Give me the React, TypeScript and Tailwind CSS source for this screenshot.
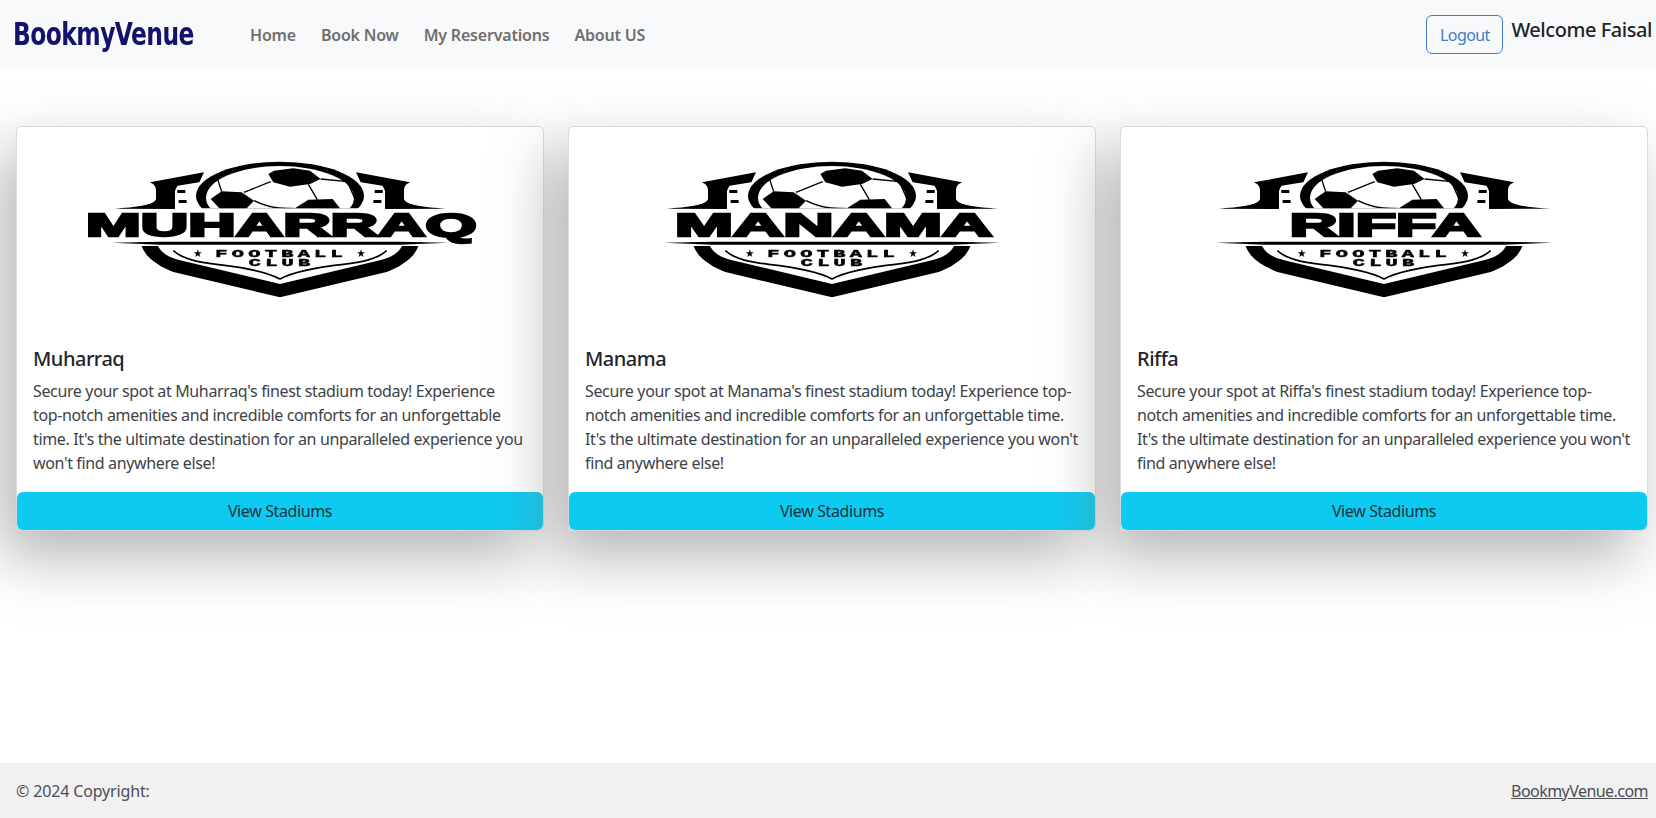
const clubs = [
  { name: "Muharraq", word: "MUHARRAQ", wordX: 78, wordW: 1172 },
  { name: "Manama", word: "MANAMA", wordX: 189, wordW: 952 },
  { name: "Riffa", word: "RIFFA", wordX: 377, wordW: 572 },
]

const navLinks = ["Home", "Book Now", "My Reservations", "About US"]

function Crest({ word, wordX, wordW }: { word: string; wordX: number; wordW: number }) {
  return (
    <svg viewBox="0 0 1320 480" className="w-[440px] h-[160px] blur-[0.4px]">
      <clipPath id={`ball-${word}`}>
        <rect x="300" y="0" width="720" height="178" />
      </clipPath>
      {/* wings */}
      <path d="M432 70 L270 100 C280 105 288 110 288 125 L288 150 C284 168 230 175 160 179 L345 180 L345 125 L352 110 L418 100Z" />
      <path d="M888 70 L1050 100 C1040 105 1032 110 1032 125 L1032 150 C1036 168 1090 175 1160 179 L975 180 L975 125 L968 110 L902 100Z" />
      <rect x="352" y="123" width="24" height="9" />
      <rect x="356" y="153" width="24" height="9" />
      <rect x="944" y="123" width="24" height="9" />
      <rect x="940" y="153" width="24" height="9" />
      {/* ball */}
      <g clipPath={`url(#ball-${word})`}>
        <ellipse cx="660" cy="140" rx="252" ry="102" />
        <ellipse cx="660" cy="146" rx="222" ry="95" fill="#fff" />
        <path d="M625 75 L642 65 L700 58 L750 65 L782 90 L750 105 L690 113 L640 100Z" />
        <path d="M452 150 L485 127 L545 130 L582 155 L558 180 L480 180Z" />
        <path d="M695 184 L745 152 L818 150 L845 184Z" />
        <path d="M472 88 L485 128 M632 98 L552 130 M745 106 L772 152 M782 90 L862 98 L885 150 M582 155 C620 175 660 180 700 178" stroke="#000" strokeWidth="4" fill="none" />
      </g>
      {/* club name */}
      <text
        x={wordX}
        y="262"
        textLength={wordW}
        lengthAdjust="spacingAndGlyphs"
        fontFamily="'Liberation Sans', sans-serif"
        fontWeight="700"
        fontSize="96"
        stroke="#000"
        strokeWidth="7"
      >
        {word}
      </text>
      {/* shield */}
      <path d="M155 281 L300 278 L1020 278 L1165 281 L1020 287 L300 287Z" />
      <path d="M245 291 L1075 291 C1060 332 1020 352 980 369 L660 445 L340 369 C300 352 260 332 245 291Z" />
      <path d="M294 291 L1026 291 C1012 318 985 328 950 336 L660 405 L370 336 C335 328 308 318 294 291Z" fill="#fff" />
      <path d="M340 305 C370 332 420 340 470 346 C560 356 620 368 660 390 C700 368 760 356 850 346 C900 340 950 332 980 305" stroke="#000" strokeWidth="5" fill="none" />
      <text transform="translate(466 325) scale(1.9 1)" letterSpacing="6.8" fontFamily="'Liberation Mono', monospace" fontWeight="700" fontSize="32" stroke="#000" strokeWidth="1.5">
        FOOTBALL
      </text>
      <text transform="translate(566 352) scale(1.9 1)" letterSpacing="6.8" fontFamily="'Liberation Mono', monospace" fontWeight="700" fontSize="32" stroke="#000" strokeWidth="1.5">
        CLUB
      </text>
      <text x="399" y="324" fontFamily="'DejaVu Sans', sans-serif" fontSize="32">★</text>
      <text x="889" y="324" fontFamily="'DejaVu Sans', sans-serif" fontSize="32">★</text>
    </svg>
  )
}

export default function App() {
  return (
    <div className="h-screen flex flex-col bg-white font-['Noto_Sans',sans-serif] text-[#212529] overflow-hidden">
      <nav className="h-[69px] shrink-0 bg-[#f8f9fa] flex items-center pl-[13px] pr-1">
        <a className="w-[237px] font-['DejaVu_Sans_Condensed','DejaVu_Sans',sans-serif] font-bold text-[26px] tracking-[-0.55px] text-[#13136b]">
          <span className="inline-block scale-y-[1.2]">BookmyVenue</span>
        </a>
        <ul className="flex gap-[25px] text-base font-semibold text-[#6f6f6f] tracking-[-0.2px]">
          {navLinks.map((link) => (
            <li key={link}>{link}</li>
          ))}
        </ul>
        <div className="ml-auto flex items-start gap-2 h-[39px]">
          <button className="w-[77px] h-[39px] border border-[#3f7fc9] rounded-md text-base text-[#3f7fc9] tracking-[-0.6px]">Logout</button>
          <span className="text-xl font-medium leading-[30px] tracking-[-0.45px]">Welcome Faisal</span>
        </div>
      </nav>

      <main className="flex-1 pl-4 pr-2 pt-[57px]">
        <div className="grid grid-cols-3 gap-6">
          {clubs.map((club) => (
            <div
              key={club.name}
              className="bg-white border border-black/15 rounded-md shadow-[-15px_25px_60px_rgba(128,128,128,0.6)] flex flex-col"
            >
              <div className="h-[204px] flex justify-center pt-[22px]">
                <Crest word={club.word} wordX={club.wordX} wordW={club.wordW} />
              </div>
              <div className="px-4 pt-4 pb-[17px]">
                <h5 className="text-xl font-medium leading-6 mb-2 tracking-[-0.5px]">{club.name}</h5>
                <p className="text-base leading-6 text-[#3c4247] tracking-[-0.36px]">
                  Secure your spot at {club.name}'s finest stadium today! Experience top-notch amenities and incredible comforts for an unforgettable time. It's the ultimate destination for an unparalleled experience you won't find anywhere else!
                </p>
              </div>
              <button className="h-[38px] bg-[#0dcaf0] rounded-md text-base text-[#14333f] tracking-[-0.38px]">View Stadiums</button>
            </div>
          ))}
        </div>
      </main>

      <footer className="h-[55px] shrink-0 bg-[#f1f1f1] flex items-center justify-between pl-4 pr-2 text-base text-[#4a4f55]">
        <span className="tracking-[-0.15px]">© 2024 Copyright:</span>
        <a className="underline tracking-[-0.55px]">BookmyVenue.com</a>
      </footer>
    </div>
  )
}
